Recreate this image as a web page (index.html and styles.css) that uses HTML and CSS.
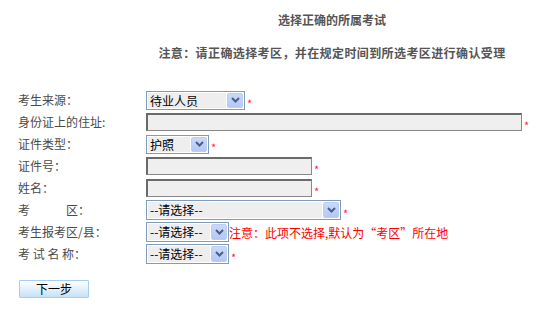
FILE: index.html
```html
<!DOCTYPE html>
<html lang="zh-CN">
<head>
<meta charset="utf-8">
<title>选择正确的所属考试</title>
<link rel="stylesheet" href="styles.css">
</head>
<body>
<div class="header">
  <div class="title">选择正确的所属考试</div>
  <div class="notice">注意：请正确选择考区，并在规定时间到所选考区进行确认受理</div>
</div>
<div class="form">
  <div class="row">
    <div class="label">考生来源：</div>
    <div class="select w99"><span class="sel-text">待业人员</span><span class="sel-btn"><svg width="9" height="6" viewBox="0 0 9 6"><path d="M1 1 L4.5 4.5 L8 1" fill="none" stroke="#4a5e86" stroke-width="2"/></svg></span></div>
    <span class="star">*</span>
  </div>
  <div class="row">
    <div class="label">身份证上的住址:</div>
    <div class="input w376"></div>
    <span class="star">*</span>
  </div>
  <div class="row">
    <div class="label">证件类型：</div>
    <div class="select w63"><span class="sel-text">护照</span><span class="sel-btn"><svg width="9" height="6" viewBox="0 0 9 6"><path d="M1 1 L4.5 4.5 L8 1" fill="none" stroke="#4a5e86" stroke-width="2"/></svg></span></div>
    <span class="star">*</span>
  </div>
  <div class="row">
    <div class="label">证件号：</div>
    <div class="input w166"></div>
    <span class="star">*</span>
  </div>
  <div class="row">
    <div class="label">姓名：</div>
    <div class="input w166"></div>
    <span class="star">*</span>
  </div>
  <div class="row">
    <div class="label">考　　　区：</div>
    <div class="select w195 h20"><span class="sel-text">--请选择--</span><span class="sel-btn"><svg width="9" height="6" viewBox="0 0 9 6"><path d="M1 1 L4.5 4.5 L8 1" fill="none" stroke="#4a5e86" stroke-width="2"/></svg></span></div>
    <span class="star">*</span>
  </div>
  <div class="row">
    <div class="label">考生报考区/县：</div>
    <div class="select w83 h20"><span class="sel-text">--请选择--</span><span class="sel-btn"><svg width="9" height="6" viewBox="0 0 9 6"><path d="M1 1 L4.5 4.5 L8 1" fill="none" stroke="#4a5e86" stroke-width="2"/></svg></span></div>
    <span class="hint">注意：此项不选择,默认为“考区”所在地</span>
  </div>
  <div class="row">
    <div class="label">考 试 名 称：</div>
    <div class="select w83 h20"><span class="sel-text">--请选择--</span><span class="sel-btn"><svg width="9" height="6" viewBox="0 0 9 6"><path d="M1 1 L4.5 4.5 L8 1" fill="none" stroke="#4a5e86" stroke-width="2"/></svg></span></div>
    <span class="star">*</span>
  </div>
</div>
<div class="actions">
  <button class="btn" type="button">下一步</button>
</div>
</body>
</html>
```
FILE: styles.css
```css
html, body {
  margin: 0;
  padding: 0;
  background: #fff;
}
body {
  font-family: "Noto Sans CJK SC", "Liberation Sans", sans-serif;
  font-size: 12px;
  color: #4a4a4a;
}
.header {
  width: 440px;
  padding-left: 112px;
  padding-top: 12px;
  text-align: center;
  font-weight: bold;
  color: #555;
}
.title {
  height: 16px;
  line-height: 16px;
}
.notice {
  margin-top: 17px;
  height: 16px;
  line-height: 16px;
  letter-spacing: 0.4px;
}
.form {
  margin-top: 28px;
  padding-left: 18px;
}
.row {
  display: flex;
  align-items: center;
  height: 22px;
}
.label {
  width: 128px;
  flex: none;
  line-height: 16px;
  color: #4a4a4a;
  white-space: pre;
}
.input {
  box-sizing: border-box;
  height: 18px;
  border: 2px solid #666;
  border-right-width: 1px;
  border-bottom-width: 1px;
  border-color: #6a6a6a #888 #888 #6a6a6a;
  background: #efefef;
}
.w376 { width: 376px; }
.w166 { width: 166px; }
.select {
  box-sizing: border-box;
  height: 19px;
  border: 1px solid #7f9db9;
  background: #fff;
  padding: 1px;
  display: flex;
  align-items: stretch;
}
.h20 { height: 20px; }
.w99 { width: 99px; }
.w63 { width: 63px; }
.w195 { width: 195px; }
.w83 { width: 83px; }
.sel-text {
  flex: 1;
  background: #eeeeee;
  color: #000;
  font-size: 12px;
  line-height: 15px;
  padding-left: 2px;
  margin-right: 1px;
  white-space: nowrap;
  overflow: hidden;
}
.sel-btn {
  width: 16px;
  flex: none;
  box-sizing: border-box;
  border: 1px solid #bccdf0;
  border-radius: 2px;
  background: linear-gradient(#c9d9fb, #b4c8f3);
  display: flex;
  align-items: center;
  justify-content: center;
}
.star {
  color: #ff2050;
  font-size: 11px;
  margin-left: 2px;
  line-height: 12px;
  align-self: center;
  margin-top: 5px;
}
.hint {
  color: #ff0000;
  font-size: 12px;
  white-space: nowrap;
}
.actions {
  margin-top: 15px;
  padding-left: 19px;
}
.btn {
  width: 70px;
  height: 18px;
  padding: 0;
  border: 1px solid #a9cdef;
  border-radius: 1px;
  background: linear-gradient(#ffffff, #c5e1fa);
  font-family: "Noto Sans CJK SC", sans-serif;
  font-size: 12px;
  color: #000;
  line-height: 16px;
}
```
